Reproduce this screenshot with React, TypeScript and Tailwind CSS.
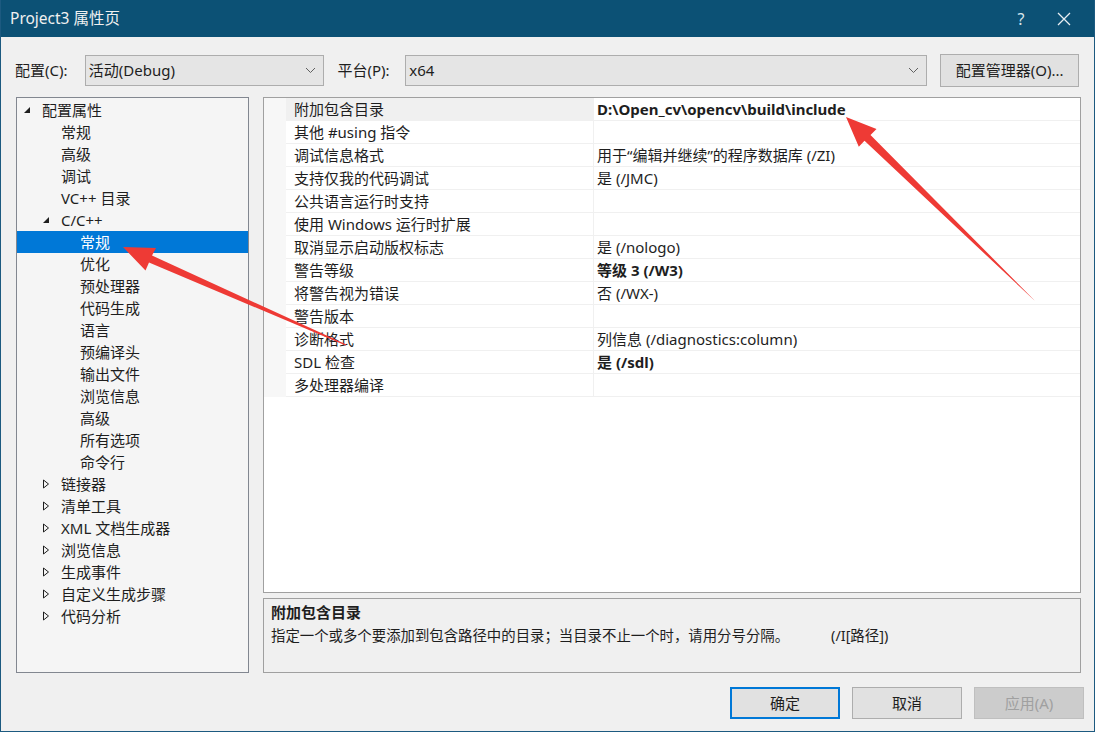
import React from 'react';

const FONT = '"Segoe UI", "Noto Sans", "Noto Sans CJK SC", sans-serif';

type TreeItem = { label: string; level: number; icon?: 'open' | 'closed'; selected?: boolean };

const tree: TreeItem[] = [
  { label: '配置属性', level: 0, icon: 'open' },
  { label: '常规', level: 1 },
  { label: '高级', level: 1 },
  { label: '调试', level: 1 },
  { label: 'VC++ 目录', level: 1 },
  { label: 'C/C++', level: 1, icon: 'open' },
  { label: '常规', level: 2, selected: true },
  { label: '优化', level: 2 },
  { label: '预处理器', level: 2 },
  { label: '代码生成', level: 2 },
  { label: '语言', level: 2 },
  { label: '预编译头', level: 2 },
  { label: '输出文件', level: 2 },
  { label: '浏览信息', level: 2 },
  { label: '高级', level: 2 },
  { label: '所有选项', level: 2 },
  { label: '命令行', level: 2 },
  { label: '链接器', level: 1, icon: 'closed' },
  { label: '清单工具', level: 1, icon: 'closed' },
  { label: 'XML 文档生成器', level: 1, icon: 'closed' },
  { label: '浏览信息', level: 1, icon: 'closed' },
  { label: '生成事件', level: 1, icon: 'closed' },
  { label: '自定义生成步骤', level: 1, icon: 'closed' },
  { label: '代码分析', level: 1, icon: 'closed' },
];

const props: { name: string; value: string; bold?: boolean }[] = [
  { name: '附加包含目录', value: 'D:\\Open_cv\\opencv\\build\\include', bold: true },
  { name: '其他 #using 指令', value: '' },
  { name: '调试信息格式', value: '用于“编辑并继续”的程序数据库 (/ZI)' },
  { name: '支持仅我的代码调试', value: '是 (/JMC)' },
  { name: '公共语言运行时支持', value: '' },
  { name: '使用 Windows 运行时扩展', value: '' },
  { name: '取消显示启动版权标志', value: '是 (/nologo)' },
  { name: '警告等级', value: '等级 3 (/W3)', bold: true },
  { name: '将警告视为错误', value: '否 (/WX-)' },
  { name: '警告版本', value: '' },
  { name: '诊断格式', value: '列信息 (/diagnostics:column)' },
  { name: 'SDL 检查', value: '是 (/sdl)', bold: true },
  { name: '多处理器编译', value: '' },
];

function Expander({ kind, selected }: { kind?: 'open' | 'closed'; selected?: boolean }) {
  if (!kind) return <span className="w-[19px] shrink-0" />;
  return (
    <span className="w-[19px] shrink-0 flex items-center">
      {kind === 'open' ? (
        <svg width="8" height="8" viewBox="0 0 8 8">
          <path d="M7 1 L7 7 L1 7 Z" fill={selected ? '#fff' : '#1e1e1e'} />
        </svg>
      ) : (
        <svg width="8" height="10" viewBox="0 0 8 10">
          <path d="M1.5 1 L6.5 5 L1.5 9 Z" fill="none" stroke="#1e1e1e" strokeWidth="1" />
        </svg>
      )}
    </span>
  );
}

function Chevron() {
  return (
    <svg width="11" height="7" viewBox="0 0 11 7">
      <path d="M1 1 L5.5 5.5 L10 1" fill="none" stroke="#606060" strokeWidth="1" />
    </svg>
  );
}

function Dropdown({ value, className }: { value: string; className: string }) {
  return (
    <div className={`h-[31px] border border-[#adadad] bg-[#e5e5e5] flex items-center justify-between pl-[3px] pr-[7px] ${className}`}>
      <span>{value}</span>
      <Chevron />
    </div>
  );
}

function Arrows() {
  return (
    <svg className="absolute inset-0 pointer-events-none" width="1095" height="732" viewBox="0 0 1095 732">
      <polygon
        points="122,247 155,248 151,255.5 345.4,344.6 344.6,345.4 148,262.6 144.5,270.5"
        fill="#ee3a35"
      />
      <polygon
        points="845,117 875.5,129 869.5,135 1033.6,300.4 1032.4,299.6 863.5,140.8 857.8,146.8"
        fill="#ee3a35"
      />
    </svg>
  );
}

export default function App() {
  return (
    <div
      className="relative w-[1095px] h-[732px] bg-[#f0f0f0] text-[15px] text-[#1e1e1e] flex flex-col border-x border-b border-[#1c5a80] overflow-hidden"
      style={{ fontFamily: FONT }}
    >
      {/* Title bar */}
      <div className="h-[37px] shrink-0 bg-[#0c5175] flex items-center text-[#f0f0f0]">
        <span className="pl-[9px] flex-1 text-[15.5px]">Project3 属性页</span>
        <span className="w-[42px] text-center text-[16px] text-[#d8e6ee]">?</span>
        <span className="w-[44px] mr-[8px] flex justify-center">
          <svg width="14" height="14" viewBox="0 0 14 14">
            <path d="M1 1 L13 13 M13 1 L1 13" stroke="#e8eef2" strokeWidth="1.3" />
          </svg>
        </span>
      </div>

      {/* Config row */}
      <div className="flex items-center h-[33px] mt-[17px] pl-[14px] pr-[15px]">
        <span className="w-[70px]">配置(C):</span>
        <Dropdown value="活动(Debug)" className="w-[240px]" />
        <span className="ml-[13px] w-[68px]">平台(P):</span>
        <Dropdown value="x64" className="w-[523px]" />
        <div className="ml-[13px] w-[139px] h-[33px] border border-[#adadad] bg-[#e1e1e1] flex items-center justify-center">
          配置管理器(O)...
        </div>
      </div>

      {/* Main */}
      <div className="flex mt-[10px] pl-[15px] pr-[13px] gap-[14px] h-[576px]">
        {/* Tree */}
        <div className="w-[233px] border border-[#828790] bg-[#f5f5f5] pt-[1px]">
          {tree.map((t, i) => (
            <div
              key={i}
              className={`h-[22px] flex items-center ${t.selected ? 'bg-[#0078d7] text-white' : ''}`}
              style={{ paddingLeft: 6 + t.level * 19 }}
            >
              <Expander kind={t.icon} selected={t.selected} />
              <span className="whitespace-nowrap">{t.label}</span>
            </div>
          ))}
        </div>

        {/* Right side */}
        <div className="flex-1 flex flex-col">
          <div className="h-[496px] border border-[#a0a0a0] bg-white">
            {props.map((p, i) => (
              <div key={i} className="h-[23px] flex">
                <div className="w-[22px] bg-[#f7f7f7]" />
                <div
                  className={`w-[307px] pl-[8px] flex items-center border-b border-[#f0f0f0] ${
                    i === 0 ? 'bg-[#f0f0f0]' : ''
                  }`}
                >
                  {p.name}
                </div>
                <div
                  className={`flex-1 border-l border-[#f0f0f0] border-b pl-[3px] flex items-center ${
                    p.bold ? 'font-bold' : ''
                  }`}
                >
                  {p.value}
                </div>
              </div>
            ))}
          </div>
          <div className="mt-[5px] h-[75px] border border-[#a0a0a0] bg-[#f0f0f0] px-[7px] pt-[1px]">
            <div className="font-bold h-[24px] flex items-center">附加包含目录</div>
            <div className="h-[24px] flex items-center text-[14.4px]">
              指定一个或多个要添加到包含路径中的目录；当目录不止一个时，请用分号分隔。
              <span className="ml-[42px]">(/I[路径])</span>
            </div>
          </div>
        </div>
      </div>

      {/* Buttons */}
      <div className="flex justify-end gap-[12px] pr-[10px] mt-[14px]">
        <div className="w-[110px] h-[32px] border-2 border-[#0078d7] bg-[#e1e1e1] flex items-center justify-center">
          确定
        </div>
        <div className="w-[110px] h-[32px] border border-[#adadad] bg-[#e1e1e1] flex items-center justify-center">
          取消
        </div>
        <div className="w-[110px] h-[32px] border border-[#bfbfbf] bg-[#cccccc] text-[#a0a0a0] flex items-center justify-center">
          应用(A)
        </div>
      </div>

      <Arrows />
    </div>
  );
}
